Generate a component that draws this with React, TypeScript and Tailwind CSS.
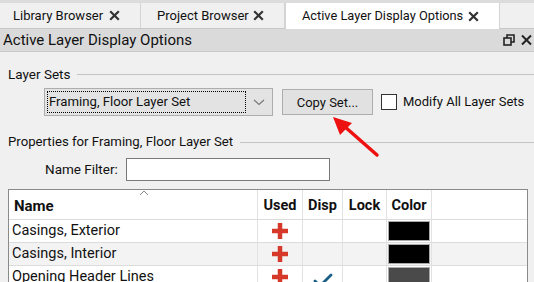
import { Check } from "lucide-react";

const font = "font-['Roboto','Noto_Sans',sans-serif]";

function TabX() {
  return (
    <svg width="11" height="11" viewBox="0 0 11 11" className="shrink-0">
      <path d="M1.2 1.2 L9.8 9.8 M9.8 1.2 L1.2 9.8" stroke="#333" strokeWidth="2.2" />
    </svg>
  );
}

function Tab({ label, w, pl }: { label: string; w: string; pl: string }) {
  return (
    <div className={`${w} ${pl} flex items-center justify-between h-[25px] pr-[20px] border-r border-[#d4d4d4] bg-[#f0f0f0]`}>
      <span className="text-[13px] text-[#111]">{label}</span>
      <TabX />
    </div>
  );
}

function RedPlus() {
  return (
    <svg width="18" height="18" viewBox="0 0 18 18">
      <path d="M9 1 V17 M1 9 H17" stroke="#d6392a" strokeWidth="4.5" />
    </svg>
  );
}

const rows = [
  { name: "Casings, Exterior", disp: false, color: "#000000" },
  { name: "Casings, Interior", disp: false, color: "#000000" },
  { name: "Opening Header Lines", disp: true, color: "#4a4a4a" },
];

export default function App() {
  return (
    <div className={`${font} relative w-[534px] h-[282px] overflow-hidden bg-[#f0f0f0] text-[#111] whitespace-nowrap`}>
      {/* tab strip */}
      <div className="h-[3px] bg-[#dcdcdc]" />
      <div className="flex items-end h-[26px] border-b border-[#c8c8c8] bg-[#f0f0f0]">
        <Tab label="Library Browser" w="w-[141px]" pl="pl-[13px]" />
        <Tab label="Project Browser" w="w-[144px]" pl="pl-[16px]" />
        <div className="w-[215px] self-start flex items-center justify-between h-[26px] pl-[16px] pr-[20px] bg-white border-x border-[#d4d4d4]">
          <span className="text-[12.8px] text-[#111]">Active Layer Display Options</span>
          <TabX />
        </div>
      </div>

      {/* panel title */}
      <div className="flex items-center h-[23px] bg-[#dadada] border-b border-[#c9c9c9] pl-[3px] pr-[2px]">
        <span className="text-[15px] flex-1">Active Layer Display Options</span>
        <svg width="12" height="12" viewBox="0 0 12 12" className="mr-[6px]">
          <rect x="1" y="4" width="7" height="7" fill="none" stroke="#222" strokeWidth="1.6" />
          <path d="M4 4 V1 H11 V8 H8" fill="none" stroke="#222" strokeWidth="1.6" />
        </svg>
        <svg width="11" height="12" viewBox="0 0 11 12">
          <path d="M1 1.5 L10 10.5 M10 1.5 L1 10.5" stroke="#222" strokeWidth="2" />
        </svg>
      </div>

      {/* layer sets group */}
      <div className="flex items-center gap-[7px] pl-[8px] mt-[14px] h-[16px]">
        <span className="text-[13.5px]">Layer Sets</span>
        <div className="flex-1 h-px bg-[#c4c4c4]" />
      </div>

      <div className="flex items-center pl-[44px] mt-[6px] h-[28px]">
        <div className="flex items-center w-[229px] h-[28px] bg-[#e3e3e3] border border-[#adadad] p-[2px]">
          <div className="flex items-center flex-1 h-full border border-dotted border-black pl-[1px]">
            <span className="text-[13.2px]">Framing, Floor Layer Set</span>
          </div>
          <svg width="18" height="10" viewBox="0 0 18 10" className="ml-[4px] mr-[2px]">
            <path d="M4 3 L9 7.5 L14 3" fill="none" stroke="#777" strokeWidth="1.2" />
          </svg>
        </div>
        <button className="ml-[9px] w-[91px] h-[26px] bg-[#e1e1e1] border border-[#adadad] text-[13px] leading-none">
          Copy Set...
        </button>
        <div className="ml-[8px] w-[16px] h-[16px] bg-white border border-[#333]" />
        <span className="ml-[6px] text-[13px]">Modify All Layer Sets</span>
      </div>

      {/* properties group */}
      <div className="flex items-center gap-[7px] pl-[8px] mt-[18px] h-[16px]">
        <span className="text-[13.2px]">Properties for Framing, Floor Layer Set</span>
        <div className="flex-1 h-px bg-[#c4c4c4]" />
      </div>

      <div className="flex items-center pl-[45px] mt-[8px] h-[23px]">
        <span className="text-[13.5px]">Name Filter:</span>
        <div className="ml-[8px] w-[204px] h-[23px] bg-white border border-[#7a7a7a]" />
      </div>

      {/* table */}
      <div className="ml-[8px] mt-[8px] w-[520px] bg-white border border-[#8a8a8a] border-b-0">
        <div className="flex h-[29px]">
          <div className="relative w-[249px] flex items-end pb-[2px] pl-[5px] border-r border-[#e2e2e2]">
            <span className="font-bold text-[15px]">Name</span>
            <svg width="10" height="6" viewBox="0 0 10 6" className="absolute left-[130px] top-0">
              <path d="M1 5 L5 1 L9 5" fill="none" stroke="#888" strokeWidth="1" />
            </svg>
          </div>
          {["Used", "Disp", "Lock", "Color"].map((h, i) => (
            <div
              key={h}
              className={`flex items-end justify-center pb-[2px] border-r border-[#e2e2e2] ${
                ["w-[45px]", "w-[40px]", "w-[44px]", "w-[45px]"][i]
              }`}
            >
              <span className="font-bold text-[14.5px]">{h}</span>
            </div>
          ))}
        </div>
        {rows.map((r, idx) => (
          <div
            key={r.name}
            className={`flex h-[23px] border-t border-[#dcdcdc] ${idx === 1 ? "bg-[#f3f3f3]" : "bg-white"}`}
          >
            <div className="w-[249px] flex items-center pl-[3px] border-r border-[#e2e2e2]">
              <span className="text-[14.5px]">{r.name}</span>
            </div>
            <div className="w-[45px] flex items-center justify-center border-r border-[#e2e2e2]">
              <RedPlus />
            </div>
            <div className="w-[40px] flex items-center justify-center border-r border-[#e2e2e2]">
              {r.disp && <Check size={24} strokeWidth={2.8} color="#1b5f86" className="mt-[8px]" />}
            </div>
            <div className="w-[44px] border-r border-[#e2e2e2]" />
            <div className="w-[45px] flex items-center justify-center border-r border-[#e2e2e2] p-[1px]">
              <div className="w-full h-full border border-[#aaa]" style={{ backgroundColor: r.color }} />
            </div>
          </div>
        ))}
      </div>

      {/* red annotation arrow */}
      <svg width="80" height="60" viewBox="0 0 80 60" className="absolute left-[325px] top-[108px]">
        <path d="M52 47 L19 18" stroke="#ee1111" strokeWidth="3.5" strokeLinecap="round" />
        <path d="M8 9 L27 15 L15 27 Z" fill="#ee1111" />
      </svg>
    </div>
  );
}
